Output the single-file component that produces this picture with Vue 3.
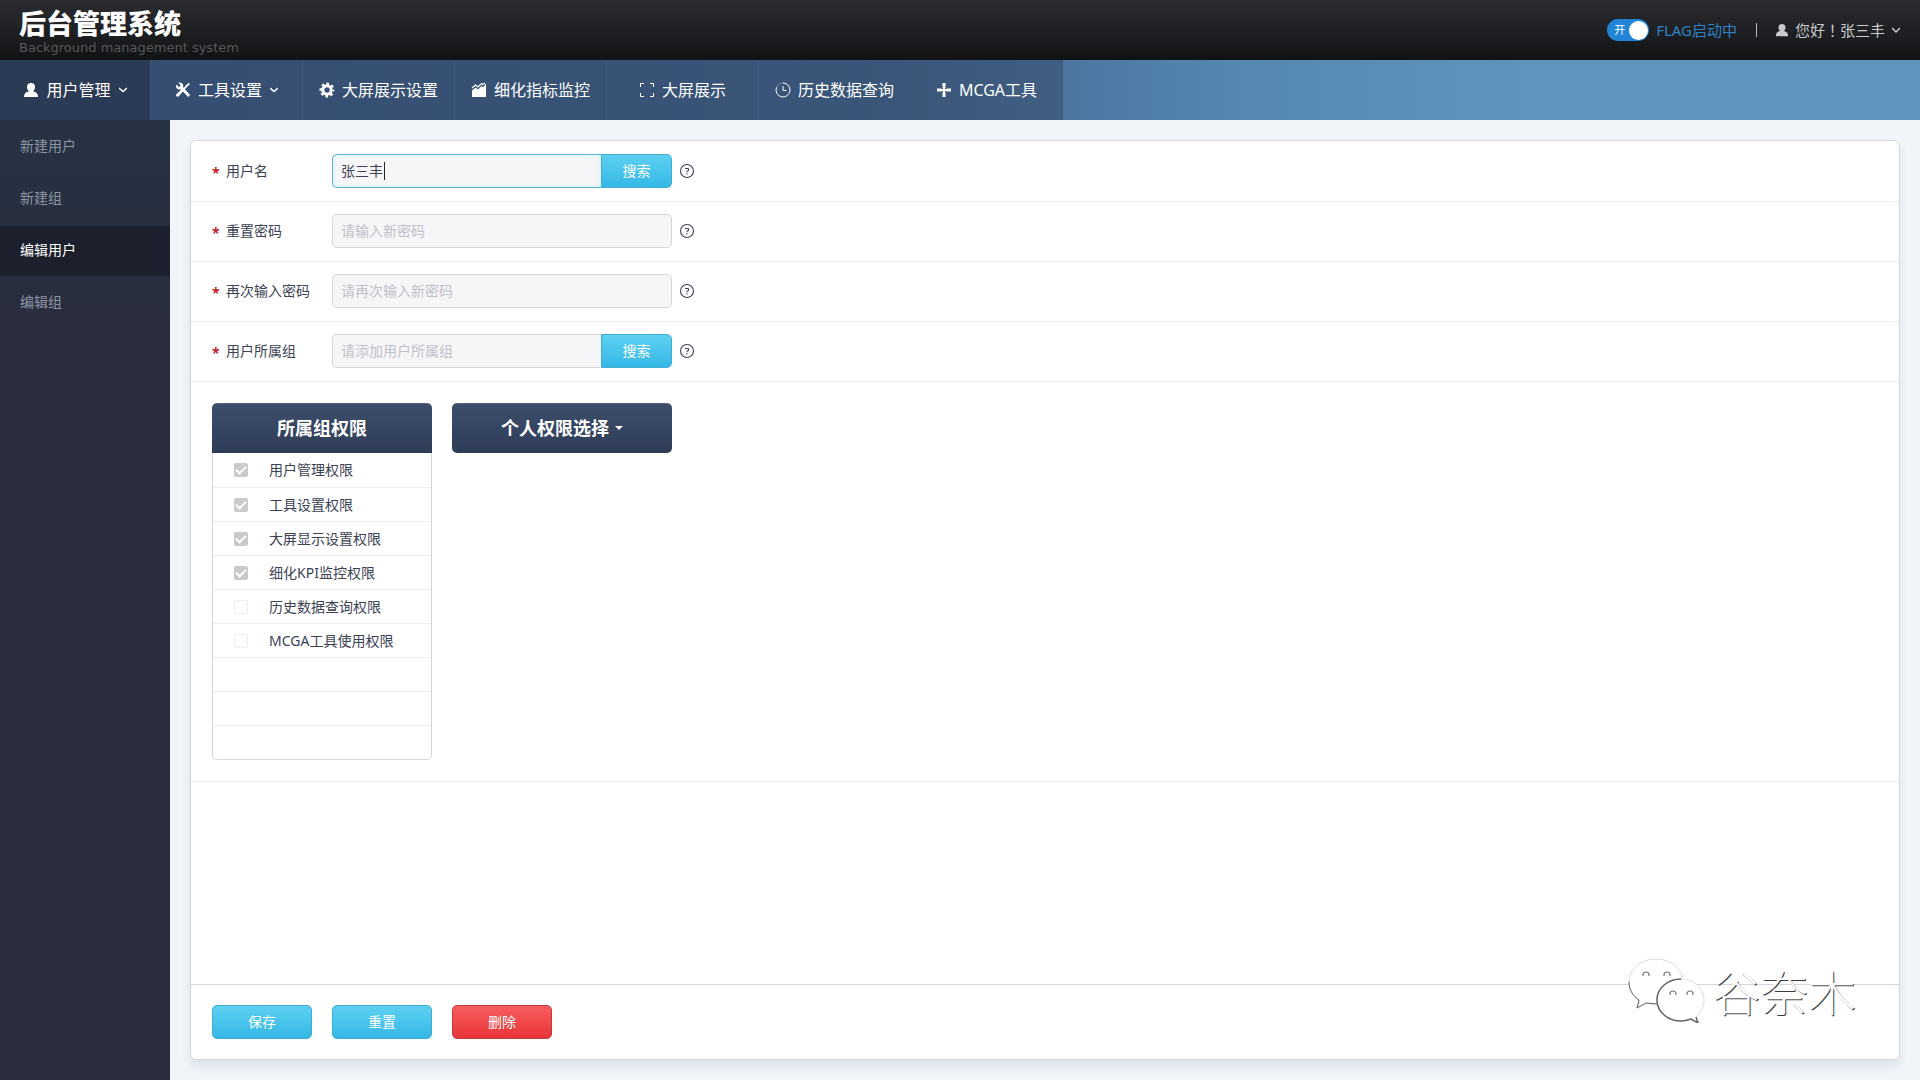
<script setup>
import { ref, reactive } from 'vue'

const icons = {
  user: 'M8 1a4 4 0 0 1 4 4c0 2-.9 3.6-2 4.200 3.200.6 5 2.300 5 5.800H1c0-3.500 1.800-5.200 5-5.800C4.900 8.600 4 7 4 5a4 4 0 0 1 4-4z',
  tools: 'M13.600.8l1.300 1.300-5 5.200 5.200 5.800-1.900 1.900-5.300-5.600-3.800 4.600c-.8.9-1.900.9-2.600.2s-.6-1.800.3-2.500l4.100-3.600-.7-.8C3.300 7.700 1.500 6.800 1 5.100.8 4.200.9 3.300 1.300 2.600l2.300 2.200 1.500-.4.4-1.500L3.300.8c2-.7 4 .1 4.700 1.800.3.8.3 1.600 0 2.400l.8.8z',
  cross: 'M6.500 1h3v4.500H9v1.500h1.500v-.5H15v3h-4.500V9H9v1.500h.5V15h-3v-4.500H7V9H5.500v.5H1v-3h4.500V7H7V5.500h-.5z'
}

const menu = [
  { label: '用户管理', icon: 'user', arrow: true },
  { label: '工具设置', icon: 'tools', arrow: true },
  { label: '大屏展示设置', icon: 'gear' },
  { label: '细化指标监控', icon: 'area' },
  { label: '大屏展示', icon: 'frame' },
  { label: '历史数据查询', icon: 'clock' },
  { label: 'MCGA工具', icon: 'cross' }
]
const activeMenu = ref('用户管理')

const sideItems = ['新建用户', '新建组', '编辑用户', '编辑组']
const activeSide = ref('编辑用户')

const fields = reactive([
  { id: 'username', label: '用户名', value: '张三丰', type: 'text', search: true, active: true },
  { id: 'password', label: '重置密码', value: '', type: 'password', placeholder: '请输入新密码' },
  { id: 'password2', label: '再次输入密码', value: '', type: 'password', placeholder: '请再次输入新密码' },
  { id: 'group', label: '用户所属组', value: '', type: 'text', placeholder: '请添加用户所属组', search: true }
])

const permissions = [
  { label: '用户管理权限', on: true },
  { label: '工具设置权限', on: true },
  { label: '大屏显示设置权限', on: true },
  { label: '细化KPI监控权限', on: true },
  { label: '历史数据查询权限', on: false },
  { label: 'MCGA工具使用权限', on: false }
]
const flagOn = ref(true)
</script>

<template>
  <div class="page">
    <header class="top">
      <div class="brand">
        <h1>后台管理系统</h1>
        <p>Background management system</p>
      </div>
      <div class="account">
        <label class="switch">
          <input v-model="flagOn" type="checkbox" />
          <span class="switch-text">开</span>
          <span class="knob"></span>
          <span class="flag">FLAG启动中</span>
        </label>
        <span class="divider"></span>
        <button class="me" type="button">
          <svg class="me-icon" viewBox="0 0 16 16"><path :d="icons.user" fill="currentColor" /></svg>
          <span>您好！张三丰</span>
          <svg class="arrow" viewBox="0 0 8 8"><path d="M0 2l4 4 4-4" fill="none" stroke="currentColor" stroke-width="1.5" /></svg>
        </button>
      </div>
    </header>

    <nav class="menu">
      <a
        v-for="m in menu"
        :key="m.label"
        href="#"
        class="menu-item"
        :class="{ active: m.label === activeMenu }"
        @click.prevent="activeMenu = m.label"
      >
        <svg class="menu-icon" viewBox="0 0 16 16">
          <g v-if="m.icon === 'gear'" fill="none" stroke="currentColor">
            <circle cx="8" cy="8" r="4.2" stroke-width="3" />
            <circle cx="8" cy="8" r="6.3" stroke-width="2.4" stroke-dasharray="2.6 2.348" stroke-dashoffset="1.3" />
          </g>
          <g v-else-if="m.icon === 'area'">
            <path d="M1 8.500l3.500-3L7 7.500l3.500-3.500L12 5.500l3-4V15H1z" fill="currentColor" />
            <path d="M1 6l3.500-3L7 5l3.500-3.500 1.200 1L14 1" fill="none" stroke="currentColor" stroke-width="1.2" />
          </g>
          <path v-else-if="m.icon === 'frame'" d="M1.500 5V1.500H5M11 1.500h3.500V5M14.500 11v3.500H11M5 14.500H1.500V11" fill="none" stroke="currentColor" />
          <g v-else-if="m.icon === 'clock'" fill="none" stroke="currentColor">
            <path d="M8 1a7 7 0 1 1-6.500 4.500M8 4v4.500h3.500" />
            <path d="M1.500 5.500A7 7 0 0 1 8 1" stroke-dasharray="1 1.5" />
          </g>
          <path v-else :d="icons[m.icon]" fill="currentColor" />
        </svg>
        <span>{{ m.label }}</span>
        <svg v-if="m.arrow" class="arrow" viewBox="0 0 8 8"><path d="M0 2l4 3.500L8 2" fill="none" stroke="currentColor" stroke-width="1.5" /></svg>
      </a>
    </nav>

    <div class="body">
      <aside class="side">
        <a
          v-for="s in sideItems"
          :key="s"
          href="#"
          class="side-item"
          :class="{ active: s === activeSide }"
          @click.prevent="activeSide = s"
        >{{ s }}</a>
      </aside>

      <main class="main">
        <form class="card" @submit.prevent>
          <div v-for="f in fields" :key="f.id" class="row">
            <span class="star">*</span>
            <label class="row-label" :for="f.id">{{ f.label }}</label>
            <div class="control" :class="{ focused: f.active, split: f.search }">
              <input :id="f.id" v-model="f.value" :type="f.type" :placeholder="f.placeholder" />
              <span v-if="f.active" class="caret"></span>
              <button v-if="f.search" class="btn search" type="button">搜索</button>
            </div>
            <svg class="help" viewBox="0 0 16 16" fill="none" stroke="currentColor">
              <circle cx="8" cy="8" r="6.5" stroke-width="1.1" />
              <path d="M6 5.500h3.500v2.300H8v1.400M8 10v1.400" />
            </svg>
          </div>

          <section class="perms">
            <div class="panel">
              <h2 class="panel-head">所属组权限</h2>
              <ul class="perm-list">
                <li v-for="p in permissions" :key="p.label">
                  <label><input type="checkbox" :checked="p.on" disabled /><span>{{ p.label }}</span></label>
                </li>
                <li v-for="n in 3" :key="n"></li>
              </ul>
            </div>
            <button class="panel-head picker" type="button">
              <span>个人权限选择</span>
              <svg viewBox="0 0 8 4"><path d="M0 0h8L4 4z" fill="currentColor" /></svg>
            </button>
          </section>

          <div class="blank"></div>

          <footer class="actions">
            <button class="btn" type="submit">保存</button>
            <button class="btn" type="reset">重置</button>
            <button class="btn danger" type="button">删除</button>
          </footer>

          <div class="mark">
            <svg viewBox="0 0 78 66">
              <g fill="#fff" stroke="#dcdcde" stroke-width="1">
                <path d="M28 2C13 2 1 12 1 25c0 8 4 14 10 18l-2 8 9-5c4 1 7 1 11 1 14 0 26-9 26-22S43 2 28 2z" />
                <path d="M1 25c0 8 4 14 10 18l-2 8 9-5 11 1" stroke="#66666a" fill="none" />
                <path d="M53 22c-13 0-24 9-24 21s11 21 24 21c4 0 7-1 10-2l7 4-2-6c5-4 8-10 8-17 0-12-10-21-23-21z" />
                <path d="M53 22c-13 0-24 9-24 21s11 21 24 21c4 0 7-1 10-2l7 4-2-6" stroke="#66666a" stroke-width="1.5" fill="none" />
              </g>
              <path d="M15 19v-1a3 3 0 0 1 6 0v1M36 19v-1a3 3 0 0 1 6 0v1M42 38v-1a3 3 0 0 1 6 0v1M59 38v-1a3 3 0 0 1 6 0v1" fill="none" stroke="#77777b" stroke-width="1.2" />
            </svg>
            <span>谷奈木</span>
          </div>
        </form>
      </main>
    </div>
  </div>
</template>

<style>
body {
  margin: 0;
  background: #f1f4f9;
}
</style>

<style scoped>
.page {
  display: flex;
  flex-direction: column;
  min-height: 100vh;
  font-family: "Noto Sans", "Noto Sans CJK SC", sans-serif;
  font-size: 14px;
  line-height: 20px;
  color: #3c4254;
}
.page * {
  box-sizing: border-box;
}
a {
  text-decoration: none;
}
button,
input {
  font: inherit;
  margin: 0;
}
button {
  cursor: pointer;
}
.top {
  display: flex;
  justify-content: space-between;
  align-items: center;
  height: 60px;
  padding: 0 20px 0 19px;
  background: linear-gradient(#2a2c30, #1d1f22 55%, #111214);
}
h1 {
  margin: 0;
  font-family: "Liberation Sans", "Noto Sans CJK SC", sans-serif;
  font-size: 27px;
  font-weight: 900;
  line-height: 36px;
  color: #fff;
}
.brand p {
  margin: 0;
  font-family: "DejaVu Sans", sans-serif;
  font-size: 13px;
  line-height: 10px;
  color: #57585b;
}
.account,
.switch,
.me {
  display: flex;
  align-items: center;
}
.account {
  font-family: "Noto Sans", "Noto Sans CJK TC", sans-serif;
  font-size: 15px;
}
.switch {
  position: relative;
  color: #2f80c6;
}
.switch input {
  appearance: none;
  width: 42px;
  height: 22px;
  border-radius: 11px;
  background: #2184d6;
}
.switch-text {
  position: absolute;
  left: 7px;
  font-size: 11px;
  color: #fff;
}
.knob {
  position: absolute;
  left: 22px;
  width: 19px;
  height: 19px;
  border-radius: 50%;
  background: #fff;
}
.flag {
  margin-left: 7px;
}
.divider {
  width: 1px;
  height: 14px;
  margin: 0 18px 0 19px;
  background: #b9babc;
}
.me {
  padding: 0;
  border: 0;
  background: none;
  color: #c9cacc;
}
.me-icon {
  width: 14px;
  height: 14px;
  margin-right: 6px;
}
.arrow {
  width: 8px;
  height: 8px;
  margin-left: 7px;
}
.menu {
  display: flex;
  height: 60px;
  background: linear-gradient(90deg, #35507a, #3f638e 45%, #5688b2 65%, #5f95bc 80%);
}
.menu-item {
  display: flex;
  justify-content: center;
  align-items: center;
  width: 152px;
  border-right: 1px solid #40597d;
  background: rgba(52, 72, 100, 0.5);
  font-size: 16px;
  color: #fff;
}
.menu-item.active {
  width: 151px;
  background: #2b3b56;
}
.menu-item .arrow {
  margin-left: 8px;
}
.menu-icon {
  width: 16px;
  height: 16px;
  margin-right: 7px;
}
.body {
  display: flex;
  flex: 1;
}
.side {
  width: 170px;
  padding-top: 1px;
  background: linear-gradient(#263242, #292d3d 200px);
}
.side-item {
  display: block;
  padding: 14px 20px 16px;
  border: solid transparent;
  border-width: 1px 0;
  background-clip: padding-box;
  color: #8d96a4;
}
.side-item.active {
  background-color: #1c202d;
  color: #fff;
}
.main {
  display: flex;
  flex: 1;
  padding: 20px;
  background: #f1f4f9;
}
.card {
  position: relative;
  display: flex;
  flex: 1;
  flex-direction: column;
  border: 1px solid #d3d6de;
  border-radius: 6px;
  background: #fff;
  box-shadow: 0 6px 10px rgba(60, 80, 110, 0.1);
}
.row {
  display: flex;
  align-items: center;
  height: 60px;
  padding-left: 21px;
}
.row + .row {
  padding-bottom: 1px;
}
.row + .row,
.perms,
.blank {
  border-top: 1px solid #eceef1;
}
.star {
  width: 14px;
  padding-top: 3px;
  font-weight: 700;
  color: #c41f2c;
}
.row-label {
  width: 106px;
}
.control {
  position: relative;
  display: flex;
  width: 340px;
  height: 34px;
}
.control input {
  flex: 1;
  min-width: 0;
  padding: 0 8px;
  border: 1px solid #d6d7dd;
  border-radius: 5px;
  outline: 0;
  background: #f6f6f9;
  color: #3c4254;
}
.control input::placeholder {
  color: #bfc0c8;
}
.split input {
  border-right: 0;
  border-radius: 5px 0 0 5px;
}
.focused input {
  border-color: #5bb4cc;
  box-shadow: inset 0 0 4px #c9f1fa;
}
.caret {
  position: absolute;
  left: 52px;
  top: 8px;
  width: 1px;
  height: 18px;
  background: #22262e;
}
.btn {
  width: 100px;
  height: 34px;
  padding: 0;
  border: 1px solid #41acd0;
  border-radius: 5px;
  background: linear-gradient(#5dd0f2, #35b8e6);
  color: #fff;
}
.btn.search {
  width: 71px;
  border-radius: 0 5px 5px 0;
}
.btn.danger {
  border-color: #c43a40;
  background: linear-gradient(#f75e5f, #e93538);
}
.help {
  width: 16px;
  height: 16px;
  margin-left: 7px;
}
.perms {
  display: flex;
  align-items: flex-start;
  gap: 20px;
  padding: 21px;
}
.panel {
  width: 220px;
}
.panel-head {
  width: 220px;
  height: 50px;
  margin: 0;
  border: 0;
  border-top: 1px solid #55647c;
  border-radius: 5px 5px 0 0;
  background: linear-gradient(#3c4e6b, #2f3c58);
  font-size: 18px;
  font-weight: 700;
  line-height: 48px;
  text-align: center;
  color: #fff;
}
.picker {
  display: flex;
  justify-content: center;
  align-items: center;
  padding: 0 0 1px;
  border-radius: 5px;
}
.picker svg {
  width: 8px;
  height: 4px;
  margin-left: 6px;
}
.perm-list {
  margin: 0;
  padding: 0;
  list-style: none;
  border: 1px solid #d3d6dc;
  border-top: 0;
  border-radius: 0 0 5px 5px;
}
.perm-list li {
  height: 34px;
}
.perm-list li + li {
  border-top: 1px solid #eceef1;
}
.perm-list label {
  display: flex;
  align-items: center;
  height: 34px;
  padding-left: 21px;
}
.perm-list input {
  display: grid;
  place-items: center;
  appearance: none;
  width: 14px;
  height: 14px;
  margin-right: 21px;
  border: 1px solid #eeeff0;
  border-radius: 2px;
}
.perm-list input:checked {
  border-color: #c9cacb;
  background: #c9cacb;
}
.perm-list input:checked::before {
  content: "";
  width: 8px;
  height: 4px;
  margin-bottom: 3px;
  border: solid #fff;
  border-width: 0 0 2px 2px;
  rotate: -45deg;
}
.blank {
  flex: 1;
}
.actions {
  display: flex;
  gap: 20px;
  padding: 20px 21px;
  border-top: 1px solid #d3d6dc;
}
.mark {
  position: absolute;
  right: 43px;
  bottom: 33px;
  display: flex;
  align-items: center;
  font-family: "Noto Sans CJK SC", sans-serif;
  font-size: 48px;
  font-weight: 300;
  line-height: 72px;
  color: #fff;
  text-shadow: 1px 1px 0 #3c3c40;
}
.mark svg {
  width: 78px;
  height: 66px;
  margin-right: 6px;
}
</style>
